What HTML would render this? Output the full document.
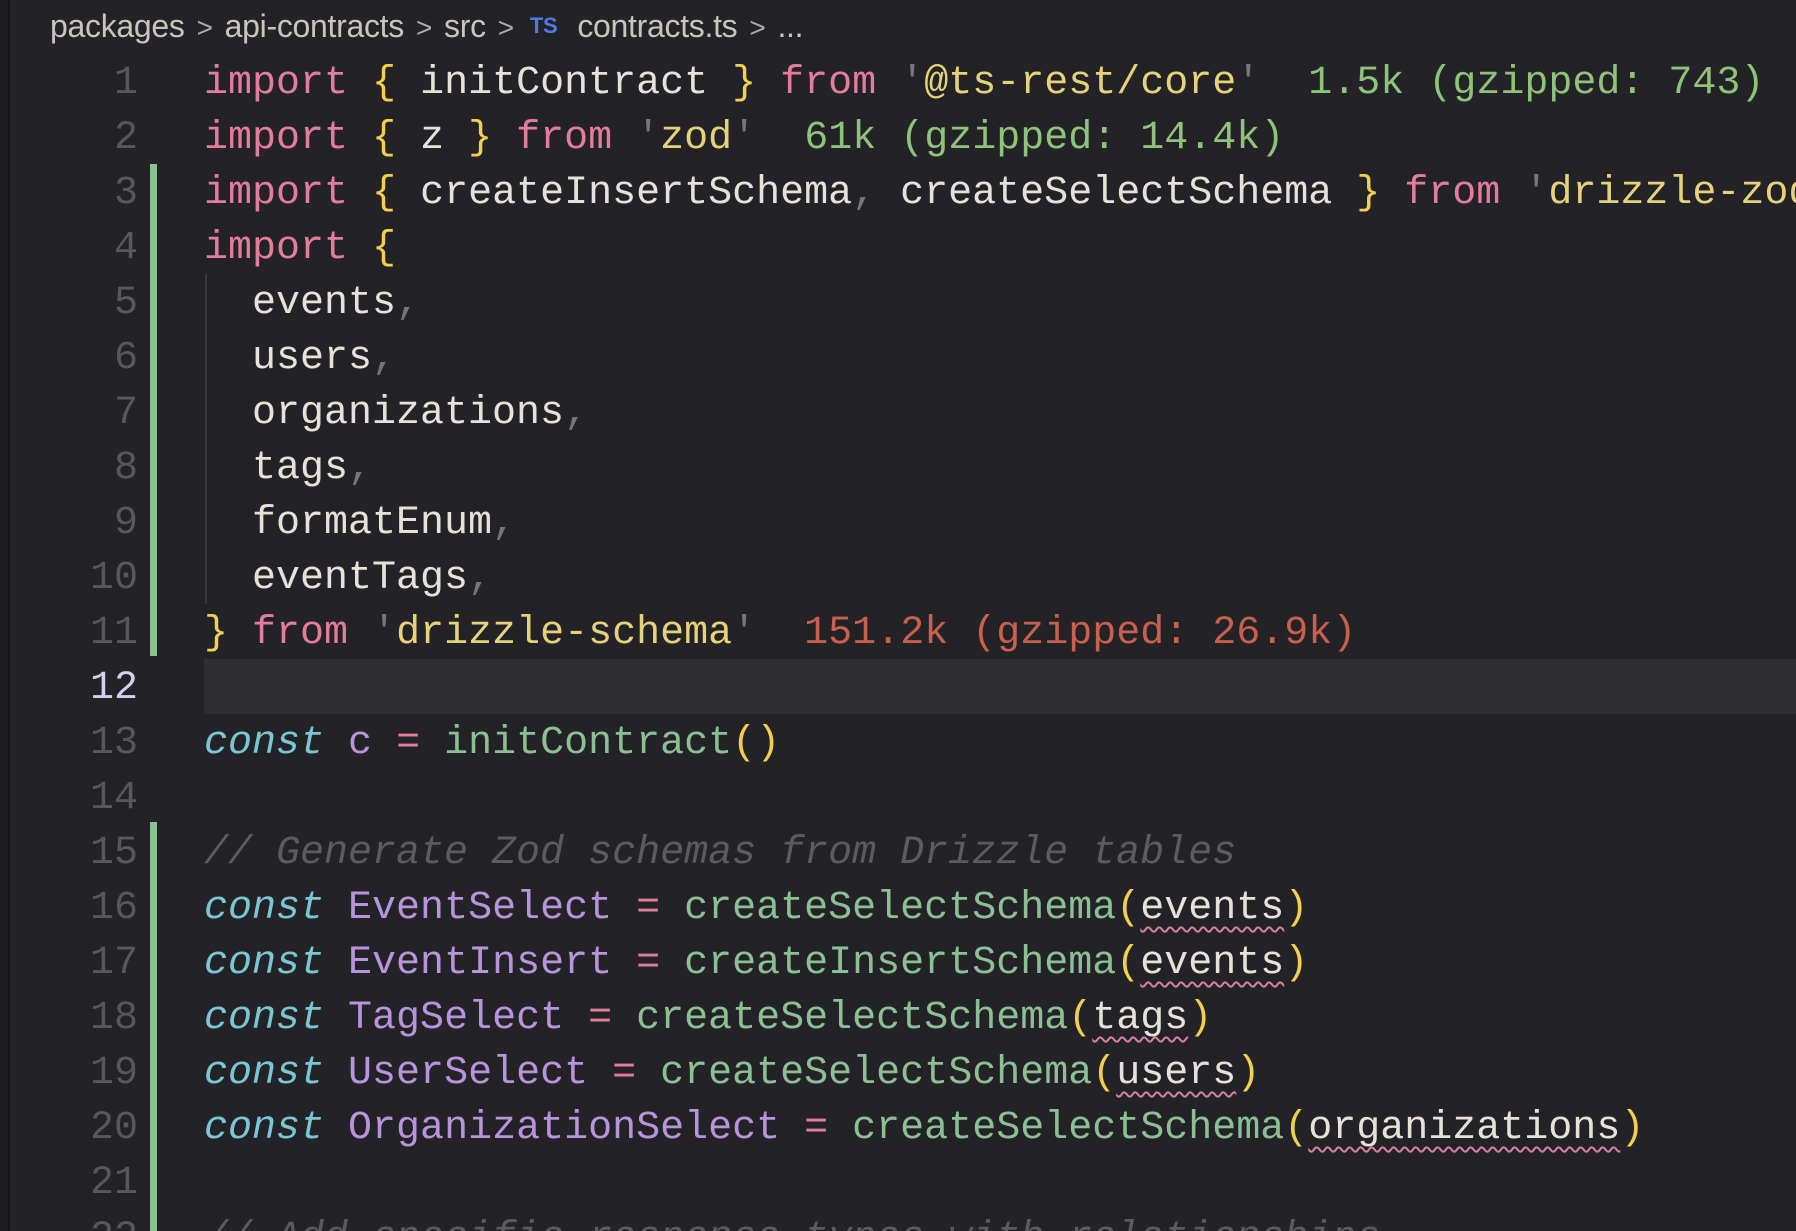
<!DOCTYPE html>
<html><head><meta charset="utf-8"><style>
html,body{margin:0;padding:0;width:1796px;height:1231px;overflow:hidden;}
body{background:#232327;position:relative;font-family:"Liberation Mono",monospace;}
.strip{position:absolute;left:0;top:0;width:8px;height:1231px;background:#1d1d21;}
.sep{position:absolute;left:8px;top:0;width:2px;height:1231px;background:#151517;}
.bc{position:absolute;left:50px;top:8px;font-family:"Liberation Sans",sans-serif;font-size:32px;color:#c9c5bd;white-space:pre;letter-spacing:-0.3px;}
.bc .ch{color:#b0ada6;margin:0 12px;font-size:28px;}
.bc .ts{color:#4f7be3;font-weight:bold;font-size:22px;margin-right:20px;margin-left:4px;vertical-align:4px;}
.ln{position:absolute;left:60px;width:78px;text-align:right;font-size:40px;line-height:55px;color:#58575c;}
.ln.cur{color:#d6cfe9;}
.code{position:absolute;left:204px;top:56px;font-size:40px;line-height:55px;white-space:pre;color:#e6e2da;}
.bar{position:absolute;left:150px;width:7px;background:#8fbf94;}
.cl{position:absolute;left:204px;right:0;top:659px;height:55px;background:#2d2d32;}
.guide{position:absolute;left:205px;top:274px;width:2px;height:330px;background:#38383d;}
.k{color:#e47c9c}.b{color:#f2d04f}.s{color:#e6d27a}.q{color:#77757a}.g{color:#8fc27a}.r{color:#c9604e}
.c{color:#7ac6d3;font-style:italic}.p{color:#b794db}.f{color:#8dbf95}.cm{color:#5d5a60;font-style:italic}.pu{color:#77757a}
.w{text-decoration:underline wavy #d97fa1;text-decoration-thickness:2px;text-underline-offset:8px;}
.lns{position:absolute;left:0;top:4px;}
</style></head><body>
<div class="strip"></div><div class="sep"></div>
<div class="bc">packages<span class="ch">&gt;</span>api-contracts<span class="ch">&gt;</span>src<span class="ch">&gt;</span><span class="ts">TS</span>contracts.ts<span class="ch">&gt;</span>...</div>
<div class="cl"></div>
<div class="guide"></div>
<div class="bar" style="top:164px;height:492px"></div>
<div class="bar" style="top:822px;height:409px"></div>
<div class="lns">
<div class="ln" style="top:52px">1</div>
<div class="ln" style="top:107px">2</div>
<div class="ln" style="top:162px">3</div>
<div class="ln" style="top:217px">4</div>
<div class="ln" style="top:272px">5</div>
<div class="ln" style="top:327px">6</div>
<div class="ln" style="top:382px">7</div>
<div class="ln" style="top:437px">8</div>
<div class="ln" style="top:492px">9</div>
<div class="ln" style="top:547px">10</div>
<div class="ln" style="top:602px">11</div>
<div class="ln cur" style="top:657px">12</div>
<div class="ln" style="top:712px">13</div>
<div class="ln" style="top:767px">14</div>
<div class="ln" style="top:822px">15</div>
<div class="ln" style="top:877px">16</div>
<div class="ln" style="top:932px">17</div>
<div class="ln" style="top:987px">18</div>
<div class="ln" style="top:1042px">19</div>
<div class="ln" style="top:1097px">20</div>
<div class="ln" style="top:1152px">21</div>
<div class="ln" style="top:1207px">22</div>
</div>
<div class="code"><span class="k">import</span> <span class="b">{</span> initContract <span class="b">}</span> <span class="k">from</span> <span class="q">'</span><span class="s">@ts-rest/core</span><span class="q">'</span>  <span class="g">1.5k (gzipped: 743)</span>
<span class="k">import</span> <span class="b">{</span> z <span class="b">}</span> <span class="k">from</span> <span class="q">'</span><span class="s">zod</span><span class="q">'</span>  <span class="g">61k (gzipped: 14.4k)</span>
<span class="k">import</span> <span class="b">{</span> createInsertSchema<span class="pu">,</span> createSelectSchema <span class="b">}</span> <span class="k">from</span> <span class="q">'</span><span class="s">drizzle-zod</span><span class="q">'</span>
<span class="k">import</span> <span class="b">{</span>
  events<span class="pu">,</span>
  users<span class="pu">,</span>
  organizations<span class="pu">,</span>
  tags<span class="pu">,</span>
  formatEnum<span class="pu">,</span>
  eventTags<span class="pu">,</span>
<span class="b">}</span> <span class="k">from</span> <span class="q">'</span><span class="s">drizzle-schema</span><span class="q">'</span>  <span class="r">151.2k (gzipped: 26.9k)</span>

<span class="c">const</span> <span class="p">c</span> <span class="k">=</span> <span class="f">initContract</span><span class="b">()</span>

<span class="cm">// Generate Zod schemas from Drizzle tables</span>
<span class="c">const</span> <span class="p">EventSelect</span> <span class="k">=</span> <span class="f">createSelectSchema</span><span class="b">(</span><span class="w">events</span><span class="b">)</span>
<span class="c">const</span> <span class="p">EventInsert</span> <span class="k">=</span> <span class="f">createInsertSchema</span><span class="b">(</span><span class="w">events</span><span class="b">)</span>
<span class="c">const</span> <span class="p">TagSelect</span> <span class="k">=</span> <span class="f">createSelectSchema</span><span class="b">(</span><span class="w">tags</span><span class="b">)</span>
<span class="c">const</span> <span class="p">UserSelect</span> <span class="k">=</span> <span class="f">createSelectSchema</span><span class="b">(</span><span class="w">users</span><span class="b">)</span>
<span class="c">const</span> <span class="p">OrganizationSelect</span> <span class="k">=</span> <span class="f">createSelectSchema</span><span class="b">(</span><span class="w">organizations</span><span class="b">)</span>

<span class="cm">// Add specific response types with relationships</span></div>
</body></html>
